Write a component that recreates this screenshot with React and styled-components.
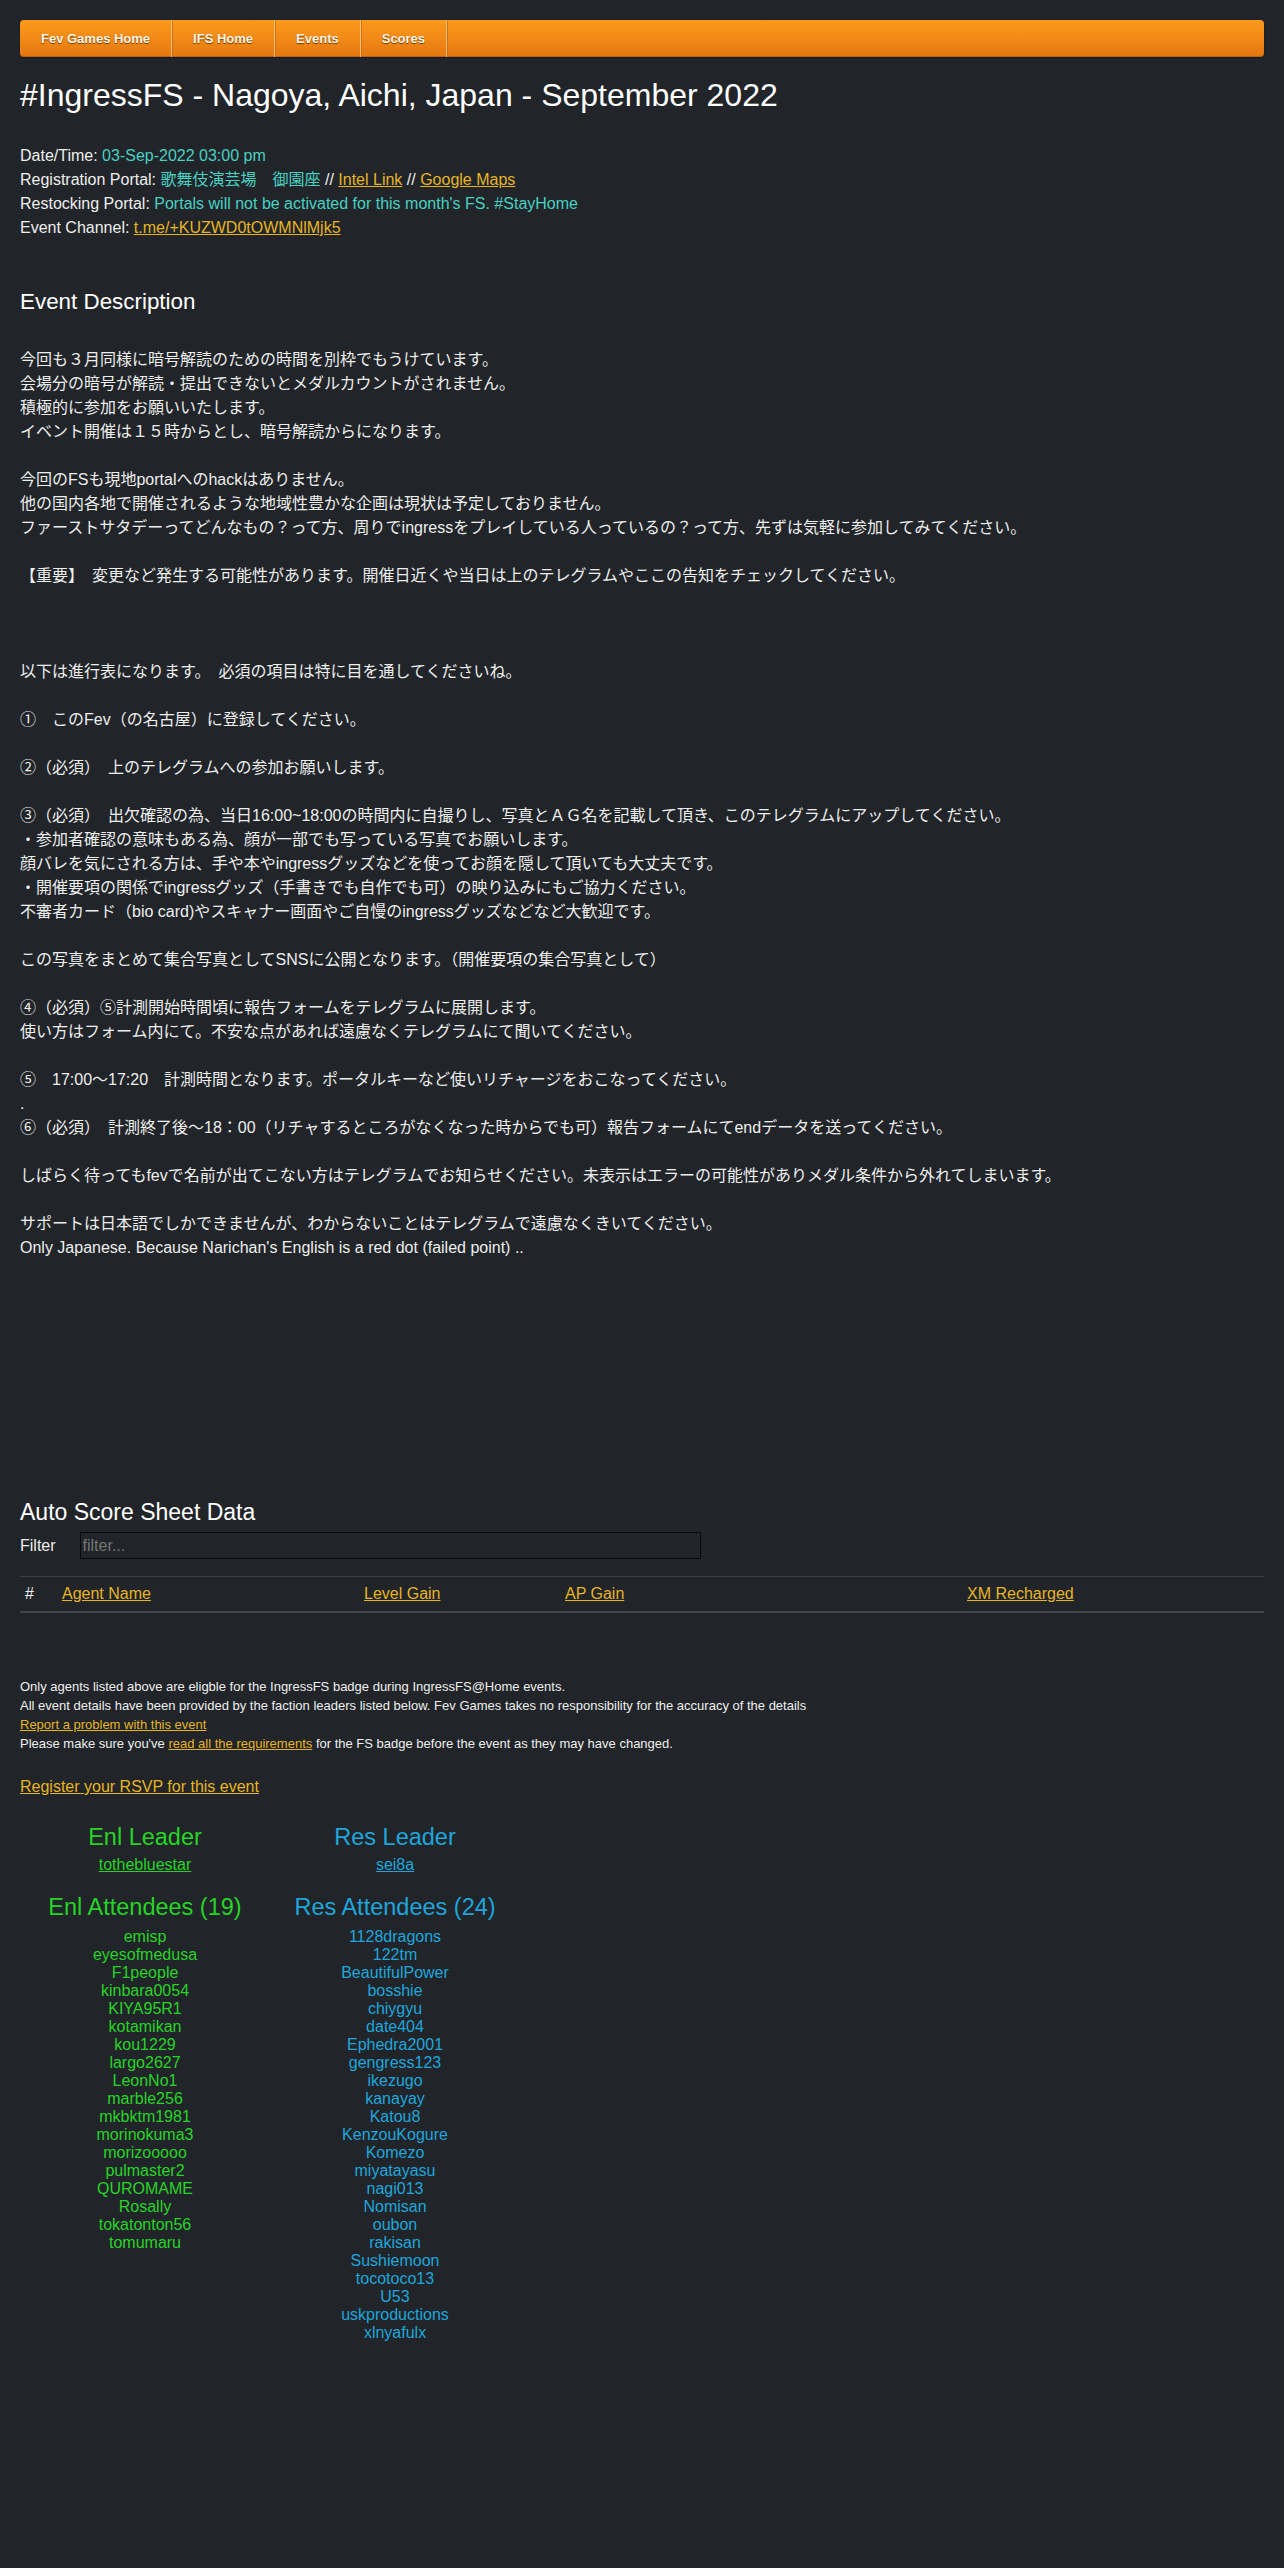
import React from 'react';
import styled, {createGlobalStyle} from 'styled-components';

const GlobalStyle = createGlobalStyle`
html, body {
  margin: 0;
  background: #212529;
}
body {
  color: #eeeeee;
  font-family: "Liberation Sans", Arial, "Noto Sans CJK JP", sans-serif;
  font-size: 16px;
  line-height: 24px;
}
`;

const Page = styled.div`
padding: 20px 20px 200px;
`;

const NavBar = styled.nav`
display: flex;
height: 37px;
border-radius: 4px;
background: linear-gradient(to bottom, #fb9a1b 0%, #f08816 55%, #e3770f 100%);
box-shadow: inset 0 -1px 0 rgba(150, 70, 0, 0.45), 0 1px 2px rgba(0, 0, 0, 0.4);
overflow: hidden;
`;

const NavItem = styled.a`
display: block;
padding: 0 21px;
line-height: 37px;
font-size: 13px;
font-weight: bold;
color: #fff4e2;
text-decoration: none;
text-shadow: 0 1px 1px rgba(0, 0, 0, 0.55);
border-right: 1px solid rgba(255, 214, 160, 0.75);
box-shadow: 1px 0 0 rgba(190, 95, 10, 0.6);
`;

const Title = styled.h1`
margin: 19px 0 0;
font-size: 32px;
line-height: 38px;
font-weight: normal;
color: #ffffff;
`;

const InfoList = styled.div`
margin-top: 30px;
`;

const InfoLine = styled.div`
line-height: 24px;
`;

const Value = styled.span`
color: #48d0c2;
`;

const GoldLink = styled.a`
color: #e6b422;
text-decoration: underline;
`;

const SectionTitle = styled.h2`
margin: 48px 0 0;
font-size: 22.4px;
line-height: 27px;
font-weight: normal;
color: #ffffff;
`;

const Description = styled.div`
margin-top: 33px;
`;

const DescLine = styled.div`
min-height: 24px;
line-height: 24px;
white-space: pre;
`;

const ScoreTitle = styled.h2`
margin: 238px 0 0;
font-size: 23px;
line-height: 28px;
font-weight: normal;
color: #ffffff;
`;

const FilterRow = styled.div`
display: flex;
align-items: center;
gap: 24px;
margin-top: 6px;
`;

const FilterLabel = styled.label`
font-size: 16px;
`;

const FilterInput = styled.input`
width: 621px;
height: 27px;
box-sizing: border-box;
padding: 0 2px;
background: #212529;
border: 1px solid #0a0a0a;
color: #eee;
font-family: "Liberation Sans", Arial, sans-serif;
font-size: 16px;

&::placeholder {
  color: #757575;
}
`;

const ScoreTable = styled.div`
display: grid;
grid-template-columns: 37px 302px 201px 402px 1fr;
margin-top: 17px;
border-top: 1px solid #3a3f44;
border-bottom: 2px solid #41464c;
`;

const HeaderCell = styled.div`
padding: 5px 5px;
line-height: 24px;
`;

const Notes = styled.div`
margin-top: 64px;
font-size: 13px;
line-height: 19px;
`;

const RsvpLink = styled(GoldLink)`
display: inline-block;
margin-top: 22px;
line-height: 24px;
`;

const FactionGrid = styled.div`
display: grid;
grid-template-columns: 250px 250px;
margin-top: 24px;
`;

const FactionColumn = styled.div`
text-align: center;
color: ${({$faction}) => ($faction === 'enl' ? '#26d426' : '#1ea6dc')};
`;

const FactionTitle = styled.h3`
margin: ${({$first}) => ($first ? '0' : '16px')} 0 0;
font-size: 23.5px;
line-height: 28px;
font-weight: normal;
`;

const LeaderLink = styled.a`
display: block;
margin-top: 2px;
color: inherit;
text-decoration: underline;
line-height: 24px;
`;

const NameList = styled.div`
margin-top: 7px;
`;

const Name = styled.div`
line-height: 18px;
`;

const navItems = ['Fev Games Home', 'IFS Home', 'Events', 'Scores'];

const description = [
  '今回も３月同様に暗号解読のための時間を別枠でもうけています。',
  '会場分の暗号が解読・提出できないとメダルカウントがされません。',
  '積極的に参加をお願いいたします。',
  'イベント開催は１５時からとし、暗号解読からになります。',
  '',
  '今回のFSも現地portalへのhackはありません。',
  '他の国内各地で開催されるような地域性豊かな企画は現状は予定しておりません。',
  'ファーストサタデーってどんなもの？って方、周りでingressをプレイしている人っているの？って方、先ずは気軽に参加してみてください。',
  '',
  '【重要】　変更など発生する可能性があります。開催日近くや当日は上のテレグラムやここの告知をチェックしてください。',
  '',
  '',
  '',
  '以下は進行表になります。　必須の項目は特に目を通してくださいね。',
  '',
  '①　このFev（の名古屋）に登録してください。',
  '',
  '②（必須）　上のテレグラムへの参加お願いします。',
  '',
  '③（必須）　出欠確認の為、当日16:00~18:00の時間内に自撮りし、写真とＡＧ名を記載して頂き、このテレグラムにアップしてください。',
  '・参加者確認の意味もある為、顔が一部でも写っている写真でお願いします。',
  '顔バレを気にされる方は、手や本やingressグッズなどを使ってお顔を隠して頂いても大丈夫です。',
  '・開催要項の関係でingressグッズ（手書きでも自作でも可）の映り込みにもご協力ください。',
  '不審者カード（bio card)やスキャナー画面やご自慢のingressグッズなどなど大歓迎です。',
  '',
  'この写真をまとめて集合写真としてSNSに公開となります。（開催要項の集合写真として）',
  '',
  '④（必須）⑤計測開始時間頃に報告フォームをテレグラムに展開します。',
  '使い方はフォーム内にて。不安な点があれば遠慮なくテレグラムにて聞いてください。',
  '',
  '⑤　17:00～17:20　計測時間となります。ポータルキーなど使いリチャージをおこなってください。',
  '.',
  '⑥（必須）　計測終了後～18：00（リチャするところがなくなった時からでも可）報告フォームにてendデータを送ってください。',
  '',
  'しばらく待ってもfevで名前が出てこない方はテレグラムでお知らせください。未表示はエラーの可能性がありメダル条件から外れてしまいます。',
  '',
  'サポートは日本語でしかできませんが、わからないことはテレグラムで遠慮なくきいてください。',
  "Only Japanese. Because Narichan's English is a red dot (failed point) ..",
];

const enlAgents = [
  'emisp', 'eyesofmedusa', 'F1people', 'kinbara0054', 'KIYA95R1', 'kotamikan',
  'kou1229', 'largo2627', 'LeonNo1', 'marble256', 'mkbktm1981', 'morinokuma3',
  'morizooooo', 'pulmaster2', 'QUROMAME', 'Rosally', 'tokatonton56', 'tomumaru',
];

const resAgents = [
  '1128dragons', '122tm', 'BeautifulPower', 'bosshie', 'chiygyu', 'date404',
  'Ephedra2001', 'gengress123', 'ikezugo', 'kanayay', 'Katou8', 'KenzouKogure',
  'Komezo', 'miyatayasu', 'nagi013', 'Nomisan', 'oubon', 'rakisan',
  'Sushiemoon', 'tocotoco13', 'U53', 'uskproductions', 'xlnyafulx',
];

const Faction = ({faction, label, leader, count, agents}) => (
  <FactionColumn $faction={faction}>
    <FactionTitle $first>{label} Leader</FactionTitle>
    <LeaderLink href="#">{leader}</LeaderLink>
    <FactionTitle>{label} Attendees ({count})</FactionTitle>
    <NameList>
      {agents.map((a) => (
        <Name key={a}>{a}</Name>
      ))}
    </NameList>
  </FactionColumn>
);

const App = () => {
  return (
    <>
      <GlobalStyle />
      <Page>
        <NavBar>
          {navItems.map((item) => (
            <NavItem key={item} href="#">{item}</NavItem>
          ))}
        </NavBar>

        <Title>#IngressFS - Nagoya, Aichi, Japan - September 2022</Title>

        <InfoList>
          <InfoLine>Date/Time: <Value>03-Sep-2022 03:00 pm</Value></InfoLine>
          <InfoLine>
            Registration Portal: <Value>歌舞伎演芸場　御園座</Value> // <GoldLink href="#">Intel Link</GoldLink> // <GoldLink href="#">Google Maps</GoldLink>
          </InfoLine>
          <InfoLine>
            Restocking Portal: <Value>Portals will not be activated for this month's FS. #StayHome</Value>
          </InfoLine>
          <InfoLine>Event Channel: <GoldLink href="#">t.me/+KUZWD0tOWMNlMjk5</GoldLink></InfoLine>
        </InfoList>

        <SectionTitle>Event Description</SectionTitle>
        <Description>
          {description.map((line, i) => (
            <DescLine key={i}>{line}</DescLine>
          ))}
        </Description>

        <ScoreTitle>Auto Score Sheet Data</ScoreTitle>
        <FilterRow>
          <FilterLabel>Filter</FilterLabel>
          <FilterInput placeholder="filter..." />
        </FilterRow>
        <ScoreTable>
          <HeaderCell>#</HeaderCell>
          <HeaderCell><GoldLink href="#">Agent Name</GoldLink></HeaderCell>
          <HeaderCell><GoldLink href="#">Level Gain</GoldLink></HeaderCell>
          <HeaderCell><GoldLink href="#">AP Gain</GoldLink></HeaderCell>
          <HeaderCell><GoldLink href="#">XM Recharged</GoldLink></HeaderCell>
        </ScoreTable>

        <Notes>
          <div>Only agents listed above are eligble for the IngressFS badge during IngressFS@Home events.</div>
          <div>All event details have been provided by the faction leaders listed below. Fev Games takes no responsibility for the accuracy of the details</div>
          <div><GoldLink href="#">Report a problem with this event</GoldLink></div>
          <div>
            Please make sure you've <GoldLink href="#">read all the requirements</GoldLink> for the FS badge before the event as they may have changed.
          </div>
        </Notes>

        <RsvpLink href="#">Register your RSVP for this event</RsvpLink>

        <FactionGrid>
          <Faction faction="enl" label="Enl" leader="tothebluestar" count={19} agents={enlAgents} />
          <Faction faction="res" label="Res" leader="sei8a" count={24} agents={resAgents} />
        </FactionGrid>
      </Page>
    </>
  );
};

export default App;
